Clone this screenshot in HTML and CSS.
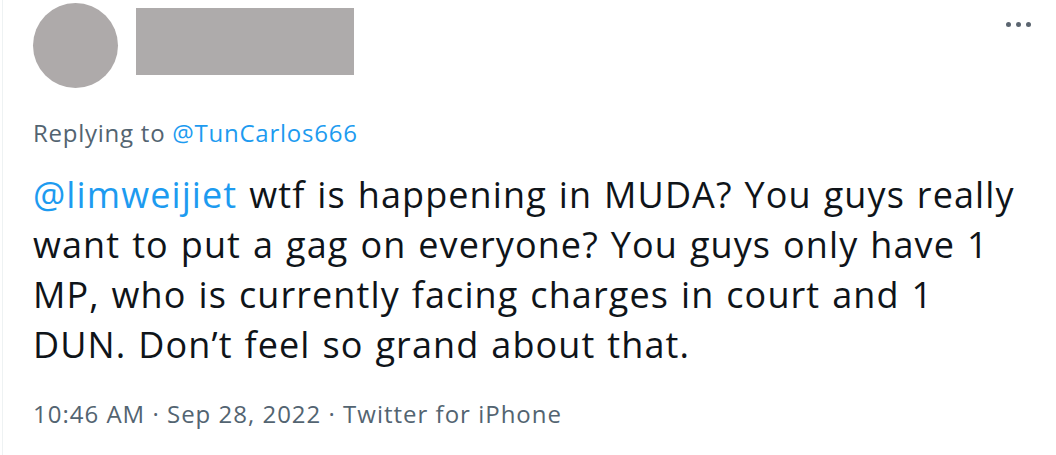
FILE: index.html
```html
<!DOCTYPE html>
<html lang="en">
<head>
<meta charset="UTF-8" />
<title>Tweet</title>
<link rel="stylesheet" href="styles.css">
</head>
<body>
  <article class="tweet">
    <!-- Шапка: аватар, скрытое имя, меню -->
    <div class="tweet-head">
      <div class="avatar"></div>
      <div class="name-block"></div>
      <button class="more" aria-label="More">
        <span></span><span></span><span></span>
      </button>
    </div>

    <div class="reply-to">Replying to <a href="#">@TunCarlos666</a></div>

    <p class="tweet-text"><a href="#">@limweijiet</a> wtf is happening in MUDA? You guys really want to put a gag on everyone? You guys only have 1 MP, who is currently facing charges in court and 1 DUN. Don’t feel so grand about that.</p>

    <div class="tweet-meta">10:46 AM · Sep 28, 2022 · Twitter for iPhone</div>
  </article>
</body>
</html>
```

FILE: styles.css
```css
body {
  margin:0; padding:0;
  background:#fff;
  font-family: 'Open Sans', 'Noto Sans', sans-serif;
  color:#0f1419;
}
.tweet {
  margin-left: 2px;
  border-left: 1px solid #eef2f3;
  height: 455px;
  padding: 3px 0 0 30px;
  box-sizing: border-box;
}
.tweet-head {
  display:flex;
  align-items:flex-start;
  height: 110px;
}
.avatar {
  width: 85px;
  height: 85px;
  border-radius: 50%;
  background:#aeaaaa;
}
.name-block {
  width: 218px;
  height: 67px;
  margin: 5px 0 0 18px;
  background:#aeabab;
}
.more {
  margin: 19px 25px 0 auto;
  background:none;
  border:none;
  padding:0;
  display:flex;
  gap:5px;
}
.more span {
  width:5px;
  height:5px;
  border-radius:50%;
  background:#5b6570;
}
.reply-to {
  font-size: 24px;
  letter-spacing: 0.75px;
  color:#536471;
  line-height: 40px;
}
a {
  color:#1d9bf0;
  text-decoration:none;
}
.tweet-text {
  margin: 17px 0 0;
  width: 995px;
  font-size: 36px;
  letter-spacing: 1.1px;
  word-spacing: 1.5px;
  line-height: 50px;
}
.tweet-meta {
  margin-top: 27px;
  font-size: 24px;
  letter-spacing: 1px;
  color:#536471;
}
```
